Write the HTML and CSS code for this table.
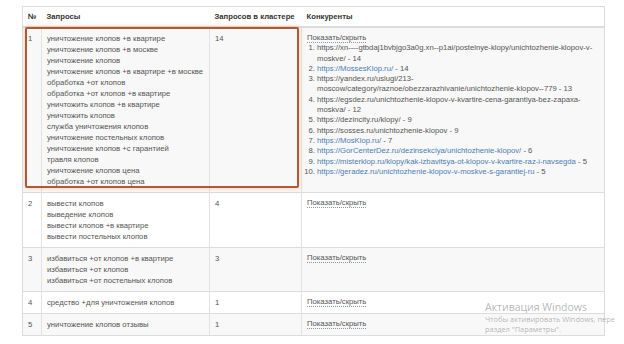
FILE: index.html
```html
<!DOCTYPE html>
<html lang="ru">
<head>
<meta charset="utf-8">
<title>Кластеры</title>
<link rel="stylesheet" href="styles.css">
</head>
<body>
<div class="page">
  <table class="clusters">
    <colgroup>
      <col class="c-num"><col class="c-q"><col class="c-cnt"><col class="c-comp">
    </colgroup>
    <thead>
      <tr><th>№</th><th>Запросы</th><th>Запросов в кластере</th><th>Конкуренты</th></tr>
    </thead>
    <tbody>
      <tr class="odd">
        <td>1</td>
        <td>уничтожение клопов +в квартире<br>уничтожение клопов +в москве<br>уничтожение клопов<br>уничтожение клопов +в квартире +в москве<br>обработка +от клопов<br>обработка +от клопов +в квартире<br>уничтожить клопов +в квартире<br>уничтожить клопов<br>служба уничтожения клопов<br>уничтожение постельных клопов<br>уничтожение клопов +с гарантией<br>травля клопов<br>уничтожение клопов цена<br>обработка +от клопов цена</td>
        <td>14</td>
        <td class="comp">
          <span class="toggle">Показать/скрыть</span>
          <ol class="sites">
            <li>https://xn----gtbdaj1bvbjgo3a0g.xn--p1ai/postelnye-klopy/unichtozhenie-klopov-v-<br>moskve/ - 14</li>
            <li><a>https://MossesKlop.ru/</a> - 14</li>
            <li>https://yandex.ru/uslugi/213-<br>moscow/category/raznoe/obezzarazhivanie/unichtozhenie-klopov--779 - 13</li>
            <li>https://egsdez.ru/unichtozhenie-klopov-v-kvartire-cena-garantiya-bez-zapaxa-<br>moskva/ - 12</li>
            <li>https://dezincity.ru/klopy/ - 9</li>
            <li>https://sosses.ru/unichtozhenie-klopov - 9</li>
            <li><a>https://MosKlop.ru/</a> - 7</li>
            <li><a>https://GorCenterDez.ru/dezinsekciya/unichtozhenie-klopov/</a> - 6</li>
            <li><a>https://misterklop.ru/klopy/kak-izbavitsya-ot-klopov-v-kvartire-raz-i-navsegda</a> - 5</li>
            <li><a>https://geradez.ru/unichtozhenie-klopov-v-moskve-s-garantiej-ru</a> - 5</li>
          </ol>
        </td>
      </tr>
      <tr>
        <td>2</td>
        <td>вывести клопов<br>выведение клопов<br>вывести клопов +в квартире<br>вывести постельных клопов</td>
        <td>4</td>
        <td class="comp"><span class="toggle">Показать/скрыть</span></td>
      </tr>
      <tr class="odd">
        <td>3</td>
        <td>избавиться +от клопов +в квартире<br>избавиться +от клопов<br>избавиться +от постельных клопов</td>
        <td>3</td>
        <td class="comp"><span class="toggle">Показать/скрыть</span></td>
      </tr>
      <tr>
        <td>4</td>
        <td>средство +для уничтожения клопов</td>
        <td>1</td>
        <td class="comp"><span class="toggle">Показать/скрыть</span></td>
      </tr>
      <tr class="odd">
        <td>5</td>
        <td>уничтожение клопов отзывы</td>
        <td>1</td>
        <td class="comp"><span class="toggle">Показать/скрыть</span></td>
      </tr>
    </tbody>
  </table>
  <div class="highlight"></div>
  <div class="watermark">
    <div class="wm-title">Активация Windows</div>
    <div class="wm-text">Чтобы активировать Windows, пере<br>раздел "Параметры".</div>
  </div>
</div>
</body>
</html>
```
FILE: styles.css
```css
html, body {
  margin: 0;
  padding: 0;
  background: #fff;
  overflow: hidden;
}
body {
  width: 624px;
  height: 344px;
  font-family: "Liberation Sans", Arial, sans-serif;
  color: #555;
}
.page {
  position: relative;
  padding: 6px 0 0 22px;
  height: 338px;
}
.clusters {
  border-collapse: collapse;
  width: 582px;
  table-layout: fixed;
  border: 1px solid #dcdcdc;
  font-size: 7.7px;
  line-height: 11px;
}
.c-num { width: 19px; }
.c-q { width: 168px; }
.c-cnt { width: 92px; }
.c-comp { width: 303px; }
.clusters th {
  text-align: left;
  font-weight: bold;
  color: #333;
  padding: 4px 5px 4px;
  border-bottom: 2px solid #dcdcdc;
  background: #fff;
  white-space: nowrap;
}
.clusters td {
  vertical-align: top;
  padding: 5px 5px;
  border-top: 1px solid #dcdcdc;
  border-left: 1px solid #e2e2e2;
}
.clusters td:first-child { border-left: none; }
.clusters tr.odd td { background: #f8f8f8; }
.clusters td.comp {
  line-height: 10.3px;
}
.toggle {
  color: #555;
  border-bottom: 1px dotted #8a97a8;
}
.sites {
  margin: 0 0 5px;
  padding-left: 10px;
}
.sites li { white-space: nowrap; }
.sites a { color: #4a7db5; }
.highlight {
  position: absolute;
  left: 25px;
  top: 27px;
  width: 270px;
  height: 157px;
  border: 2px solid #b05a35;
  border-radius: 2px;
  box-shadow: 0 0 5px rgba(230, 140, 100, 0.45);
}
.watermark {
  position: absolute;
  left: 485px;
  top: 300px;
  width: 139px;
  overflow: hidden;
  color: rgba(120, 120, 120, 0.55);
  font-family: "Open Sans", "Noto Sans", sans-serif;
  white-space: nowrap;
}
.wm-title {
  font-size: 10.5px;
  line-height: 14px;
}
.wm-text {
  font-size: 7.4px;
  line-height: 10px;
}
```
